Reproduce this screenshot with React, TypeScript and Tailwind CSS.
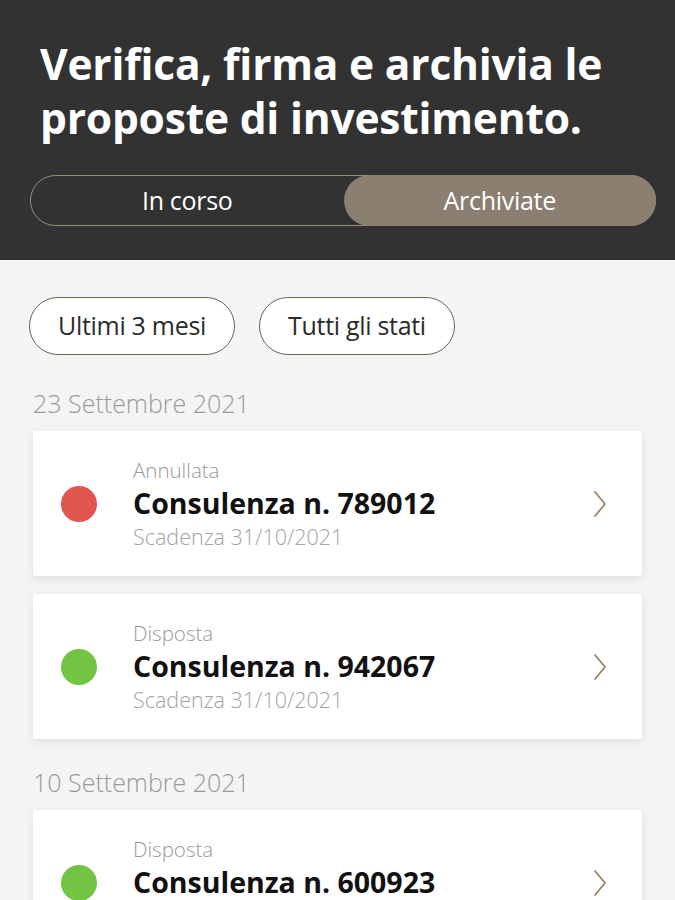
const cardsByDate = [
  {
    date: '23 Settembre 2021',
    items: [
      { status: 'Annullata', color: 'bg-[#e0564f]', code: '789012', expiry: '31/10/2021' },
      { status: 'Disposta', color: 'bg-[#74c444]', code: '942067', expiry: '31/10/2021' },
    ],
  },
  {
    date: '10 Settembre 2021',
    items: [{ status: 'Disposta', color: 'bg-[#74c444]', code: '600923', expiry: '31/10/2021' }],
  },
];

function Chevron() {
  return (
    <svg width="16" height="30" viewBox="0 0 16 30" fill="none" className="shrink-0">
      <polyline points="3,3 13,15 3,27" stroke="#a07f5c" strokeWidth="1.8" strokeLinecap="round" strokeLinejoin="round" />
    </svg>
  );
}

export default function App() {
  return (
    <div className="w-full h-[900px] overflow-hidden bg-[#f4f4f4] font-['Open_Sans',sans-serif]">
      {/* header */}
      <div className="bg-[#323232] pl-[30px] pr-[19px] pt-[37px] pb-[34px]">
        <h1 className="pl-[10px] text-white text-[42.5px] font-bold leading-[54px] tracking-[-0.2px]">
          Verifica, firma e archivia le
          <br />
          proposte di investimento.
        </h1>
        <div className="mt-[30px] h-[51px] flex rounded-full border border-[#9a8e7e]">
          <div className="flex-1 flex items-center justify-center text-[25px] tracking-[-0.3px] text-white">In corso</div>
          <div className="flex-1 flex items-center justify-center rounded-full bg-[#8b7f71] text-[25px] tracking-[-0.3px] text-white -my-px -mr-px">
            Archiviate
          </div>
        </div>
      </div>

      {/* content */}
      <div className="px-[33px] pt-[37px]">
        <div className="flex gap-[24px] -ml-[4px]">
          <button className="h-[58px] px-[28px] rounded-full border border-[#6f6152] bg-white text-[25px] tracking-[-0.3px] text-[#2b2b2b]">
            Ultimi 3 mesi
          </button>
          <button className="h-[58px] px-[28px] rounded-full border border-[#6f6152] bg-white text-[25px] tracking-[-0.3px] text-[#2b2b2b]">
            Tutti gli stati
          </button>
        </div>

        {cardsByDate.map((group, gi) => (
          <div key={gi} className={gi === 0 ? 'mt-[32px]' : 'mt-[27px]'}>
            <div className="text-[25px] font-light leading-[32px] text-[#9a9a9a] mb-[12px]">{group.date}</div>
            <div className="flex flex-col gap-[18px]">
              {group.items.map((item, ii) => (
                <div
                  key={ii}
                  className="h-[145px] bg-white rounded-[3px] shadow-[0_3px_10px_rgba(0,0,0,0.09)] flex items-center pl-[28px] pr-[34px]"
                >
                  <div className={`w-[36px] h-[36px] rounded-full shrink-0 ${item.color}`} />
                  <div className="flex-1 ml-[36px] flex flex-col">
                    <span className="text-[20.5px] font-light leading-[28px] text-[#9a9a9a]">{item.status}</span>
                    <span className="text-[28.5px] font-bold leading-[38px] text-[#111]">Consulenza n. {item.code}</span>
                    <span className="text-[21.5px] font-light leading-[30px] text-[#a3a3a3]">Scadenza {item.expiry}</span>
                  </div>
                  <Chevron />
                </div>
              ))}
            </div>
          </div>
        ))}
      </div>
    </div>
  );
}
